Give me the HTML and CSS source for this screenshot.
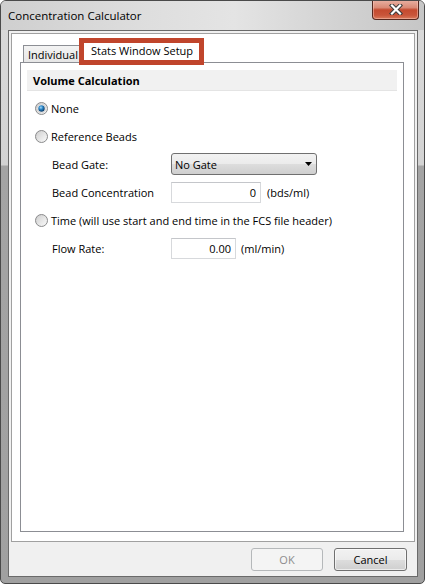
FILE: index.html
```html
<!DOCTYPE html>
<html>
<head>
<meta charset="utf-8">
<title>Concentration Calculator</title>
<link rel="stylesheet" href="styles.css">
</head>
<body>
<div class="window">
  <div class="titlebar">
    <span class="title">Concentration Calculator</span>
    <div class="close">
      <svg width="14" height="11" viewBox="0 0 14 11">
        <path d="M3 1.5 L11 9.5 M11 1.5 L3 9.5" stroke="#3a3a3a" stroke-width="4.2" stroke-linecap="square" fill="none"/>
        <path d="M3 1.5 L11 9.5 M11 1.5 L3 9.5" stroke="#ffffff" stroke-width="2.2" stroke-linecap="square" fill="none"/>
      </svg>
    </div>
  </div>
  <div class="client">
    <div class="panel">
      <div class="tabstrip">
        <div class="tab">Individual</div>
        <div class="tab tab-active">Stats Window Setup</div>
      </div>
      <div class="tabpage">
        <div class="section-head">Volume Calculation</div>
        <div class="options">
          <div class="row radio-row">
            <svg class="radio" width="13" height="13" viewBox="0 0 13 13">
              <defs>
                <linearGradient id="rgA" x1="0" y1="0" x2="1" y2="1">
                  <stop offset="0" stop-color="#c9c9c9"/>
                  <stop offset="1" stop-color="#fbfbfb"/>
                </linearGradient>
                <radialGradient id="dotA" cx="0.4" cy="0.35" r="0.65">
                  <stop offset="0" stop-color="#a8dcf8"/>
                  <stop offset="0.45" stop-color="#2b86c8"/>
                  <stop offset="1" stop-color="#0b3a66"/>
                </radialGradient>
              </defs>
              <circle cx="6.5" cy="6.5" r="6" fill="url(#rgA)" stroke="#8a8b8c"/>
              <circle cx="6.5" cy="6.5" r="4.3" fill="#f4f4f4" stroke="#c4c4c4" stroke-width="0.6"/>
              <circle cx="6.5" cy="6.5" r="3.2" fill="url(#dotA)"/>
            </svg>
            <span>None</span>
          </div>
          <div class="row radio-row">
            <svg class="radio" width="13" height="13" viewBox="0 0 13 13">
              <defs>
                <linearGradient id="rgB" x1="0" y1="0" x2="1" y2="1">
                  <stop offset="0" stop-color="#cbcbcb"/>
                  <stop offset="1" stop-color="#fbfbfb"/>
                </linearGradient>
                <linearGradient id="inB" x1="0" y1="0" x2="1" y2="1">
                  <stop offset="0" stop-color="#d4d4d4"/>
                  <stop offset="1" stop-color="#f6f6f6"/>
                </linearGradient>
              </defs>
              <circle cx="6.5" cy="6.5" r="6" fill="url(#rgB)" stroke="#8a8b8c"/>
              <circle cx="6.5" cy="6.5" r="4.2" fill="url(#inB)"/>
            </svg>
            <span>Reference Beads</span>
          </div>
          <div class="row field-row">
            <span class="label">Bead Gate:</span>
            <div class="combo">
              <span>No Gate</span>
              <svg class="arrow" width="7" height="4" viewBox="0 0 7 4"><path d="M0 0 L7 0 L3.5 4 Z" fill="#000"/></svg>
            </div>
          </div>
          <div class="row field-row">
            <span class="label">Bead Concentration</span>
            <div class="textbox tb-wide">0</div>
            <span class="unit">(bds/ml)</span>
          </div>
          <div class="row radio-row">
            <svg class="radio" width="13" height="13" viewBox="0 0 13 13">
              <circle cx="6.5" cy="6.5" r="6" fill="url(#rgB)" stroke="#8a8b8c"/>
              <circle cx="6.5" cy="6.5" r="4.2" fill="url(#inB)"/>
            </svg>
            <span>Time (will use start and end time in the FCS file header)</span>
          </div>
          <div class="row field-row">
            <span class="label">Flow Rate:</span>
            <div class="textbox tb-narrow">0.00</div>
            <span class="unit unit-narrow">(ml/min)</span>
          </div>
        </div>
      </div>
    </div>
    <div class="buttons">
      <div class="btn btn-disabled">OK</div>
      <div class="btn btn-cancel">Cancel</div>
    </div>
  </div>
</div>
</body>
</html>
```

FILE: styles.css
```css
html, body {
  margin: 0;
  padding: 0;
  background: #ffffff;
}

body {
  width: 425px;
  height: 584px;
  overflow: hidden;
  font-family: "Open Sans", "Noto Sans", sans-serif;
  font-size: 11px;
  color: #000;
}

.window {
  box-sizing: border-box;
  width: 425px;
  height: 584px;
  border: 1px solid #4a4a4a;
  border-radius: 6px 6px 5px 5px;
  background: linear-gradient(to bottom, #dadada 0, #d3d3d3 164px, #a4a4a4 165px, #a0a0a0 100%);
  display: flex;
  flex-direction: column;
  overflow: hidden;
}

.titlebar {
  height: 29px;
  flex: none;
  display: flex;
  align-items: flex-start;
  background: linear-gradient(90deg, #cfcfcf 0%, #dedede 35%, #e4e4e4 55%, #d2d2d2 80%, #c6c6c6 100%);
}

.title {
  margin-left: 7px;
  margin-top: 6px;
  font-size: 11.5px;
  line-height: 17px;
  color: #000;
}

.close {
  margin-left: auto;
  margin-right: 5px;
  margin-top: -1px;
  width: 45px;
  height: 19px;
  border: 1px solid #55281f;
  border-top: none;
  border-radius: 0 0 4px 4px;
  background: linear-gradient(to bottom, #e9b2a4 0%, #d98a76 40%, #c44a2f 52%, #c9553a 80%, #d97b5c 100%);
  display: flex;
  align-items: center;
  justify-content: center;
  box-shadow: inset 0 0 0 1px rgba(255, 210, 200, 0.45);
}

.client {
  flex: none;
  margin: 0 6px 0 7px;
  height: 547px;
  box-sizing: border-box;
  border: 1px solid #6a6a6a;
  background: #f0f0f0;
  display: flex;
  flex-direction: column;
}

.panel {
  margin: 2px 2px 0 2px;
  height: 509px;
  box-sizing: border-box;
  border: 1px solid #a0a0a0;
  background: #ffffff;
  padding: 4px 10px 9px 8px;
  display: flex;
  flex-direction: column;
}

.tabstrip {
  height: 24px;
  flex: none;
  display: flex;
  align-items: flex-end;
  padding-left: 3px;
  position: relative;
  z-index: 2;
}

.tab {
  box-sizing: border-box;
  height: 17px;
  width: 61px;
  border: 1px solid #8c8e94;
  border-bottom: none;
  background: linear-gradient(to bottom, #f3f3f3, #e6e6e6);
  padding: 1px 0 0 4px;
  line-height: 15px;
  white-space: nowrap;
  overflow: hidden;
}

.tab-active {
  width: 125px;
  height: 27px;
  margin-left: -5px;
  margin-bottom: -3px;
  border: 5px solid #c0452c;
  background: #ffffff;
  padding: 0 0 0 7px;
  line-height: 16px;
  overflow: visible;
}

.tabpage {
  flex: 1;
  box-sizing: border-box;
  border: 1px solid #8c8e94;
  background: #ffffff;
  padding: 7px 6px;
}

.section-head {
  height: 21px;
  box-sizing: border-box;
  background: #f1f1f1;
  border-bottom: 1px solid #e4e4e4;
  font-weight: bold;
  padding: 1px 0 0 6px;
  line-height: 20px;
}

.options {
  padding-top: 3px;
}

.row {
  height: 28px;
  display: flex;
  align-items: center;
  white-space: nowrap;
}

.radio-row {
  padding-left: 8px;
}

.radio {
  flex: none;
  margin-right: 3px;
}

.field-row {
  padding-left: 25px;
}

.label {
  width: 119px;
  flex: none;
}

.combo {
  box-sizing: border-box;
  width: 146px;
  height: 22px;
  border: 1px solid #707070;
  border-radius: 3px;
  background: linear-gradient(to bottom, #f2f2f2 0%, #ebebeb 50%, #dddddd 51%, #cfcfcf 100%);
  display: flex;
  align-items: center;
  padding: 0 4px 0 3px;
}

.arrow {
  margin-left: auto;
}

.textbox {
  box-sizing: border-box;
  height: 21px;
  border: 1px solid #d7d9dc;
  border-top-color: #c4c6ca;
  background: #ffffff;
  text-align: right;
  padding-right: 4px;
  line-height: 19px;
}

.tb-wide {
  width: 90px;
}

.tb-narrow {
  width: 65px;
}

.unit {
  margin-left: 6px;
}

.unit-narrow {
  margin-left: 5px;
}

.buttons {
  display: flex;
  justify-content: flex-end;
  gap: 11px;
  padding: 6px 10px 5px 0;
}

.btn {
  box-sizing: border-box;
  height: 23px;
  border-radius: 3px;
  display: flex;
  align-items: center;
  justify-content: center;
}

.btn-disabled {
  width: 72px;
  border: 1px solid #b5b8ba;
  background: #f4f4f4;
  color: #8d8d8d;
}

.btn-cancel {
  width: 73px;
  border: 1px solid #707070;
  background: linear-gradient(to bottom, #f2f2f2 0%, #ebebeb 50%, #dddddd 51%, #cfcfcf 100%);
  box-shadow: inset 0 0 0 1px rgba(255, 255, 255, 0.6);
}
```
